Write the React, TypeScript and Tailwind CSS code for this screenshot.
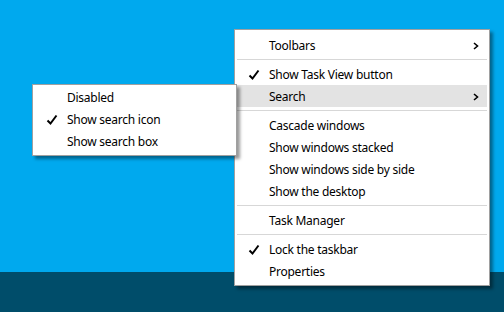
import React from 'react';

type Item = { label: string; checked?: boolean; sub?: boolean; active?: boolean } | 'sep';

const mainItems: Item[] = [
  { label: 'Toolbars', sub: true },
  'sep',
  { label: 'Show Task View button', checked: true },
  { label: 'Search', sub: true, active: true },
  'sep',
  { label: 'Cascade windows' },
  { label: 'Show windows stacked' },
  { label: 'Show windows side by side' },
  { label: 'Show the desktop' },
  'sep',
  { label: 'Task Manager' },
  'sep',
  { label: 'Lock the taskbar', checked: true },
  { label: 'Properties' },
];

const searchItems: Item[] = [
  { label: 'Disabled' },
  { label: 'Show search icon', checked: true },
  { label: 'Show search box' },
];

const Check = () => (
  <svg width="12" height="12" viewBox="0 0 12 12" className="block">
    <path d="M1.5 6.5 L4.5 9.5 L10.5 1.5" fill="none" stroke="#000" strokeWidth="2" />
  </svg>
);

const Chevron = () => (
  <svg width="6" height="8" viewBox="0 0 6 8" className="block">
    <path d="M1 1 L4.5 4 L1 7" fill="none" stroke="#000" strokeWidth="1.6" />
  </svg>
);

const Menu = ({ items, className }: { items: Item[]; className: string }) => (
  <div
    className={`absolute flex flex-col bg-white border border-[#a0a0a0] px-[2px] shadow-[3px_3px_3px_rgba(0,0,0,0.4)] ${className}`}
  >
    {items.map((it, i) =>
      it === 'sep' ? (
        <div key={i} className="py-[3px]">
          <div className="h-px bg-[#d7d7d7]" />
        </div>
      ) : (
        <div
          key={i}
          className={`flex items-center h-[22px] pt-[2px] ${it.active ? 'bg-[#e3e3e3]' : ''}`}
        >
          <div className="w-[32px] flex justify-center pl-[2px]">{it.checked && <Check />}</div>
          <span className="flex-1 text-[12px] tracking-[-0.25px] text-black leading-none">{it.label}</span>
          {it.sub && (
            <div className="w-[20px] flex justify-center pr-[2px]">
              <Chevron />
            </div>
          )}
        </div>
      )
    )}
  </div>
);

export default function App() {
  return (
    <div
      className="relative w-[504px] h-[312px] flex flex-col overflow-hidden"
      style={{ fontFamily: '"Noto Sans", "Open Sans", sans-serif' }}
    >
      <div className="flex-1 bg-[#00a9ee]" />
      <div className="h-[40px] bg-[#004d6a]" />
      <Menu items={mainItems} className="left-[234px] top-[29px] w-[256px] pt-[4px] pb-[3px]" />
      <Menu items={searchItems} className="left-[32px] top-[84px] w-[205px] pt-[1px] pb-[3px]" />
    </div>
  );
}
